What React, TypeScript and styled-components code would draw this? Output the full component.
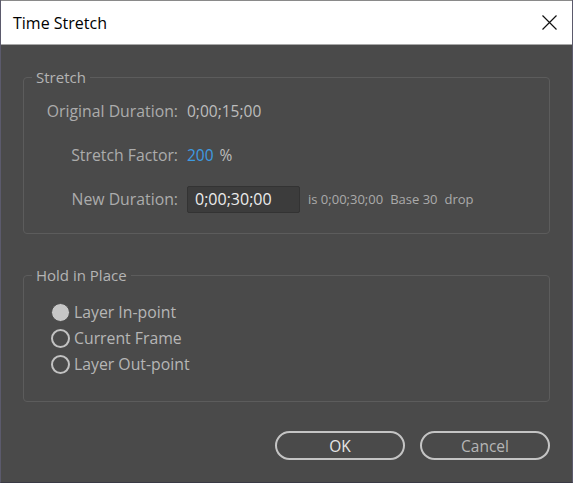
import React from "react";
import styled, { createGlobalStyle } from "styled-components";

const Global = createGlobalStyle`
  html, body { margin: 0; padding: 0; background: #4a4a4a; }
  body { font-family: "Open Sans", "Noto Sans", "Liberation Sans", sans-serif; }
  * { box-sizing: border-box; }
`;

const Window = styled.div`
  width: 573px;
  height: 483px;
  display: flex;
  flex-direction: column;
  background: #4a4a4a;
  border-left: 1px solid #5b5a6c;
  border-right: 1px solid #5b5a6c;
  border-bottom: 1px solid #3a3a44;
`;

const TitleBar = styled.div`
  height: 45px;
  flex: none;
  display: flex;
  align-items: center;
  justify-content: space-between;
  background: #ffffff;
  border-top: 1px solid #8a8a8a;
  border-bottom: 1px solid #a8a8a8;
  padding: 0 15px 0 12px;
`;

const Title = styled.div`
  font-size: 16px;
  color: #000;
`;

const Body = styled.div`
  flex: 1;
  display: flex;
  flex-direction: column;
  padding: 22px 22px 0 22px;
`;

const Group = styled.fieldset<{ $pt: number; $pb: number; $mt?: number }>`
  margin: ${(p) => p.$mt ?? 0}px 0 0 0;
  padding: ${(p) => p.$pt}px 0 ${(p) => p.$pb}px 0;
  border: 1px solid #5c5c5c;
  border-radius: 4px;
  min-width: 0;
`;

const Legend = styled.legend`
  margin-left: 8px;
  padding: 0 4px;
  font-size: 15px;
  line-height: 20px;
  color: #b4b4b4;
`;

const Row = styled.div`
  height: 44px;
  display: flex;
  align-items: center;
`;

const Label = styled.div`
  width: 154px;
  margin-right: 9px;
  text-align: right;
  font-size: 15.8px;
  color: #acacac;
  white-space: nowrap;
`;

const Value = styled.div<{ $color?: string }>`
  font-size: 15.5px;
  color: ${(p) => p.$color ?? "#bdbdbd"};
  white-space: nowrap;
`;

const Values = styled.div`
  display: flex;
  align-items: center;
  gap: 6px;
`;

const TimeInput = styled.div`
  width: 113px;
  height: 27px;
  margin-right: 8px;
  display: flex;
  align-items: center;
  padding-left: 7px;
  background: #3c3c3c;
  border: 1px solid #333333;
  border-radius: 2px;
  font-size: 16px;
  color: #ececec;
`;

const Note = styled.div`
  display: flex;
  gap: 7px;
  font-size: 13px;
  color: #aaaaaa;
  white-space: nowrap;
`;

const RadioRow = styled.div`
  height: 26px;
  display: flex;
  align-items: center;
  padding-left: 27px;
  gap: 4px;
`;

const RadioDot = styled.span<{ $checked?: boolean }>`
  width: 19px;
  height: 19px;
  border-radius: 50%;
  flex: none;
  border: ${(p) => (p.$checked ? "1px solid #4a4a4a" : "2px solid #c2c2c2")};
  background: ${(p) => (p.$checked ? "#c6c6c6" : "transparent")};
`;

const RadioLabel = styled.span`
  font-size: 15.8px;
  color: #b6b6b6;
`;

const Footer = styled.div`
  display: flex;
  justify-content: flex-end;
  gap: 15px;
  margin-top: 29px;
`;

const Button = styled.div<{ $primary?: boolean }>`
  width: 130px;
  height: 29px;
  display: flex;
  align-items: center;
  justify-content: center;
  border: 2px solid #c4c4c4;
  border-radius: 15px;
  font-size: 15.5px;
  color: ${(p) => (p.$primary ? "#e6e6e6" : "#b6b6b6")};
`;

const CloseIcon = () => (
  <svg width="15" height="15" viewBox="0 0 15 15">
    <path d="M0.5 0.5 L14.5 14.5 M14.5 0.5 L0.5 14.5" stroke="#111" strokeWidth="1.2" fill="none" />
  </svg>
);

export default function App() {
  return (
    <>
      <Global />
      <Window>
        <TitleBar>
          <Title>Time Stretch</Title>
          <CloseIcon />
        </TitleBar>
        <Body>
          <Group $pt={2} $pb={12}>
            <Legend>Stretch</Legend>
            <Row>
              <Label>Original Duration:</Label>
              <Value>0;00;15;00</Value>
            </Row>
            <Row>
              <Label>Stretch Factor:</Label>
              <Values>
                <Value $color="#3e9be2">200</Value>
                <Value>%</Value>
              </Values>
            </Row>
            <Row>
              <Label>New Duration:</Label>
              <TimeInput>0;00;30;00</TimeInput>
              <Note>
                <span>is 0;00;30;00</span>
                <span>Base 30</span>
                <span>drop</span>
              </Note>
            </Row>
          </Group>
          <Group $pt={14} $pb={24} $mt={31}>
            <Legend>Hold in Place</Legend>
            <RadioRow>
              <RadioDot $checked />
              <RadioLabel>Layer In-point</RadioLabel>
            </RadioRow>
            <RadioRow>
              <RadioDot />
              <RadioLabel>Current Frame</RadioLabel>
            </RadioRow>
            <RadioRow>
              <RadioDot />
              <RadioLabel>Layer Out-point</RadioLabel>
            </RadioRow>
          </Group>
          <Footer>
            <Button $primary>OK</Button>
            <Button>Cancel</Button>
          </Footer>
        </Body>
      </Window>
    </>
  );
}
